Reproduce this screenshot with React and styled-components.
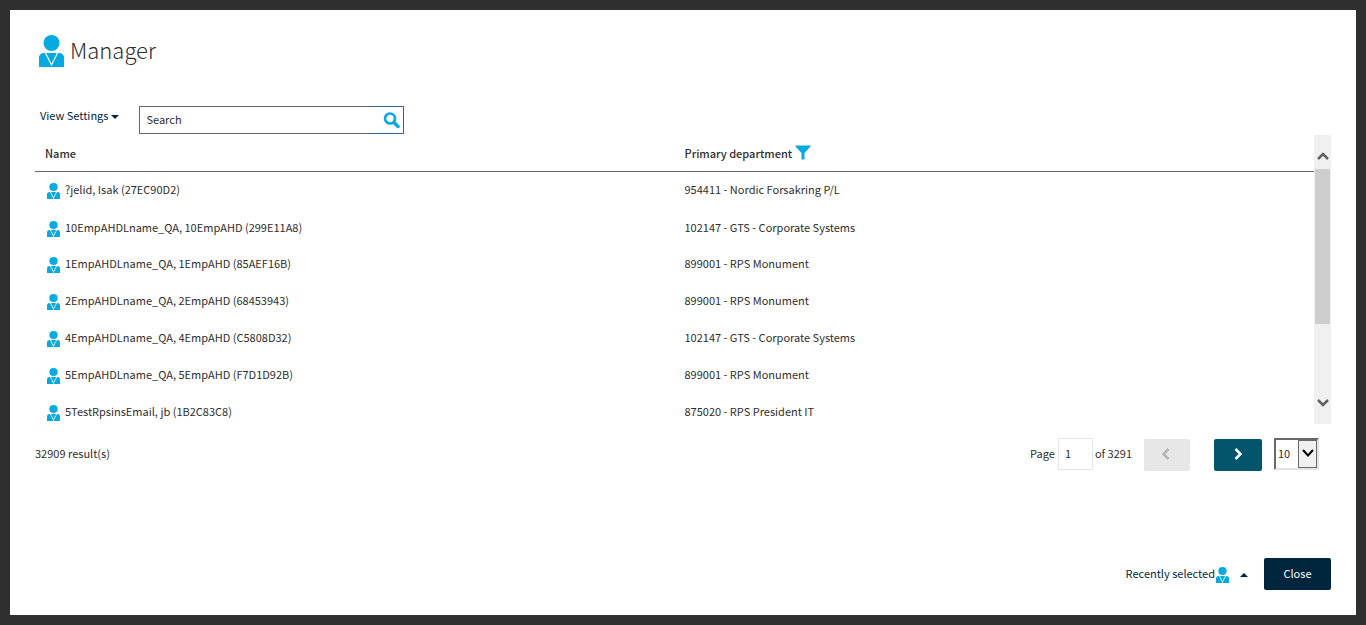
import React from 'react';
import styled, { createGlobalStyle } from 'styled-components';

const GlobalStyle = createGlobalStyle`
  *, *::before, *::after { box-sizing: border-box; }
  body {
    margin: 0;
    background: #2f2f2f;
    color: #2e2e2e;
    font-family: "Noto Sans CJK SC", "Noto Sans", sans-serif;
    font-size: 11px;
    line-height: 16px;
  }
  button, input, select { font: inherit; color: inherit; }
`;

const Page = styled.div`
  display: flex;
  min-height: 100vh;
  padding: 10px;
`;

const Dialog = styled.main`
  display: flex;
  flex: 1;
  flex-direction: column;
  min-width: 0;
  padding: 25px;
  background: #fff;
`;

const Header = styled.header`
  display: flex;
  align-items: flex-start;
  gap: 6px;
  height: 32px;
  padding-left: 4px;
`;

const Title = styled.h1`
  margin: 0;
  font-size: 22px;
  font-weight: 300;
  line-height: 28px;
`;

const PersonSvg = styled.svg`
  display: block;
  flex: none;
  width: ${(p) => (p.$large ? 25 : 13)}px;
  height: ${(p) => (p.$large ? 32 : 16)}px;
`;

const Toolbar = styled.div`
  display: flex;
  align-items: flex-start;
  gap: 20px;
  margin-top: 39px;
  padding-left: 5px;
`;

const TextButton = styled.button`
  display: flex;
  align-items: center;
  gap: ${(p) => p.$gap}px;
  height: 18px;
  padding: 0;
  border: 0;
  background: none;
  color: #00263e;
  cursor: pointer;
`;

const Caret = styled.span`
  width: 0;
  height: 0;
  margin-top: ${(p) => (p.$up ? 2 : 4)}px;
  border: 4px solid transparent;
  border-width: ${(p) => (p.$up ? '0 4px 4px' : '4px 4px 0')};
  border-color: ${(p) => (p.$up ? 'transparent transparent #00263e' : '#00263e transparent transparent')};
`;

const SearchBox = styled.form`
  display: flex;
  width: 265px;
  height: 28px;
`;

const SearchInput = styled.input`
  flex: 1;
  min-width: 0;
  padding: 0 6px 2px;
  border: 1px solid #666;
  border-right: 0;
  border-radius: 0;
  outline: 0;
  background: #fff;
  &::placeholder { color: #2e2e2e; opacity: 1; }
`;

const SearchButton = styled.button`
  display: flex;
  align-items: center;
  justify-content: flex-end;
  width: 32px;
  padding: 0 3px 0 0;
  border: 1px solid #33638a;
  border-left: 0;
  background: #fff;
  cursor: pointer;
`;

const ListArea = styled.section`
  display: flex;
  height: 289px;
  margin-top: 1px;
  overflow: hidden;
`;

const Table = styled.table`
  flex: 1;
  width: 100%;
  height: 296px;
  border-collapse: collapse;
  table-layout: fixed;
`;

const HeadCell = styled.th`
  height: 36px;
  padding: 0 10px;
  border-bottom: 1px solid #666;
  font-weight: 500;
  text-align: left;
`;

const HeadContent = styled.div`
  display: flex;
  align-items: center;
  gap: 3px;
`;

const Cell = styled.td`
  padding: 0 10px 2px;
`;

const PersonName = styled.div`
  display: flex;
  align-items: flex-start;
  gap: 5px;
  height: 16px;
  padding-left: 2px;

  ${PersonSvg} { margin-top: 2px; }
`;

const FilterButton = styled.button`
  display: flex;
  padding: 0;
  border: 0;
  background: none;
  cursor: pointer;
`;

const ScrollTrack = styled.div`
  display: flex;
  flex: none;
  flex-direction: column;
  align-items: center;
  width: 17px;
  padding: 16px 0 17px;
  background: #f0f0f0;
`;

const ScrollThumb = styled.div`
  width: 15px;
  height: 155px;
  margin-top: 9px;
  margin-bottom: auto;
  background: #cdcdcd;
`;

const ResultBar = styled.div`
  display: flex;
  align-items: center;
  justify-content: space-between;
  height: 32px;
  margin-top: 14px;
  padding-right: 12px;
`;

const BarText = styled.span`
  padding-bottom: 2px;
`;

const Pager = styled.nav`
  display: flex;
  align-items: center;
`;

const PageLabel = styled.label`
  display: flex;
  align-items: center;
  gap: 3px;
  margin-right: 2px;
`;

const PageInput = styled.input`
  width: 35px;
  height: 32px;
  padding: 0 6px 2px;
  border: 1px solid #e6e6e6;
  outline: 0;
`;

const StepButton = styled.button`
  display: flex;
  align-items: center;
  justify-content: center;
  width: ${(p) => (p.disabled ? 46 : 48)}px;
  height: 32px;
  margin-top: 2px;
  margin-left: ${(p) => (p.disabled ? 12 : 24)}px;
  padding: 0 0 2px;
  border: 0;
  border-radius: 2px;
  background: ${(p) => (p.disabled ? '#e7e7e7' : '#03556b')};
  color: ${(p) => (p.disabled ? '#b5b5b5' : '#fff')};
`;

const SizePicker = styled.div`
  position: relative;
  margin-left: 12px;
`;

const SizeSelect = styled.select`
  display: block;
  width: 45px;
  height: 32px;
  padding: 0 2px 2px;
  border: 2px solid;
  border-color: #696969 #e3e3e3 #e3e3e3 #696969;
  border-radius: 0;
  outline: 0;
  appearance: none;
  background: #fff;
`;

const SizeArrow = styled.span`
  position: absolute;
  inset: 2px 2px 2px auto;
  display: flex;
  align-items: center;
  justify-content: center;
  width: 19px;
  padding-bottom: 2px;
  border: 1px solid #696969;
  background: #f0f0f0;
  pointer-events: none;
`;

const Footer = styled.footer`
  display: flex;
  align-items: center;
  justify-content: flex-end;
  gap: 16px;
  height: 32px;
  margin-top: auto;
`;

const RecentLabel = styled.span`
  display: flex;
  align-items: flex-start;
  gap: 1px;
  height: 18px;

  ${PersonSvg} { margin-top: 2px; }
`;

const CloseButton = styled.button`
  min-width: 67px;
  height: 32px;
  padding: 0 16px 2px;
  border: 0;
  border-radius: 2px;
  background: #00263e;
  color: #fff;
  cursor: pointer;
`;

function Person({ large }) {
  return (
    <PersonSvg $large={large} viewBox="0 0 25 32" preserveAspectRatio="none" aria-hidden="true">
      <circle cx="12.5" cy="8" r="8" fill="#06a9e0" />
      <path d="M0 32V22.500Q0 19 4 18H21Q25 19 25 22.500V32Z" fill="#06a9e0" />
      <path d="M6.500 18L12.500 30L18.500 18" fill="none" stroke="#fff" strokeWidth={large ? 1.2 : 2} strokeDasharray={large ? undefined : '3 1'} />
    </PersonSvg>
  );
}

function Chevron({ d, width, height, stroke, weight }) {
  return (
    <svg width={width} height={height} viewBox={`0 0 ${width} ${height}`} aria-hidden="true">
      <path d={d} fill="none" stroke={stroke} strokeWidth={weight} />
    </svg>
  );
}

const people = [
  ['?jelid, Isak (27EC90D2)', '954411 - Nordic Forsakring P/L'],
  ['10EmpAHDLname_QA, 10EmpAHD (299E11A8)', '102147 - GTS - Corporate Systems'],
  ['1EmpAHDLname_QA, 1EmpAHD (85AEF16B)', '899001 - RPS Monument'],
  ['2EmpAHDLname_QA, 2EmpAHD (68453943)', '899001 - RPS Monument'],
  ['4EmpAHDLname_QA, 4EmpAHD (C5808D32)', '102147 - GTS - Corporate Systems'],
  ['5EmpAHDLname_QA, 5EmpAHD (F7D1D92B)', '899001 - RPS Monument'],
  ['5TestRpsinsEmail, jb (1B2C83C8)', '875020 - RPS President IT'],
];

export default function App() {
  return (
    <>
      <GlobalStyle />
      <Page>
        <Dialog>
          <Header>
            <Person large />
            <Title>Manager</Title>
          </Header>

          <Toolbar>
            <TextButton type="button" $gap={3}>
              View Settings
              <Caret />
            </TextButton>
            <SearchBox onSubmit={(e) => e.preventDefault()}>
              <SearchInput type="text" placeholder="Search" aria-label="Search" />
              <SearchButton type="submit" aria-label="Run search">
                <svg width="17" height="17" viewBox="0 0 17 17" aria-hidden="true">
                  <circle cx="7" cy="6.500" r="5" fill="none" stroke="#06a9e0" strokeWidth="2.600" />
                  <path d="M11 10.500L15 14.500" stroke="#06a9e0" strokeWidth="3.400" strokeLinecap="round" />
                </svg>
              </SearchButton>
            </SearchBox>
          </Toolbar>

          <ListArea>
            <Table>
              <thead>
                <tr>
                  <HeadCell scope="col">Name</HeadCell>
                  <HeadCell scope="col">
                    <HeadContent>
                      Primary department
                      <FilterButton type="button" aria-label="Filter departments">
                        <svg width="16" height="15" viewBox="0 0 16 15" aria-hidden="true">
                          <path d="M0.500 0.500H15.500V1.500L9.500 8V14.500H6.500V8L0.500 1.500Z" fill="#06a9e0" />
                        </svg>
                      </FilterButton>
                    </HeadContent>
                  </HeadCell>
                </tr>
              </thead>
              <tbody>
                {people.map(([name, department]) => (
                  <tr key={name}>
                    <Cell>
                      <PersonName>
                        <Person />
                        {name}
                      </PersonName>
                    </Cell>
                    <Cell>{department}</Cell>
                  </tr>
                ))}
              </tbody>
            </Table>
            <ScrollTrack aria-hidden="true">
              <Chevron width={12} height={9} d="M1 8L6 3L11 8" stroke="#606060" weight={2.5} />
              <ScrollThumb />
              <Chevron width={12} height={9} d="M1 2L6 7L11 2" stroke="#606060" weight={2.5} />
            </ScrollTrack>
          </ListArea>

          <ResultBar>
            <BarText>32909 result(s)</BarText>
            <Pager aria-label="Pages">
              <PageLabel>
                <BarText>Page</BarText>
                <PageInput type="text" defaultValue="1" />
              </PageLabel>
              <BarText>of 3291</BarText>
              <StepButton type="button" disabled aria-label="Previous page">
                <Chevron width={10} height={12} d="M6.500 1L1.500 6L6.500 11" stroke="currentColor" weight={2.5} />
              </StepButton>
              <StepButton type="button" aria-label="Next page">
                <Chevron width={10} height={12} d="M2.500 1L7.500 6L2.500 11" stroke="currentColor" weight={2.5} />
              </StepButton>
              <SizePicker>
                <SizeSelect aria-label="Rows per page" defaultValue="10">
                  <option>10</option>
                  <option>25</option>
                  <option>50</option>
                </SizeSelect>
                <SizeArrow>
                  <Chevron width={12} height={9} d="M1 1L6 6.500L11 1" stroke="#000" weight={2} />
                </SizeArrow>
              </SizePicker>
            </Pager>
          </ResultBar>

          <Footer>
            <TextButton type="button" $gap={11}>
              <RecentLabel>
                Recently selected
                <Person />
              </RecentLabel>
              <Caret $up />
            </TextButton>
            <CloseButton type="button">Close</CloseButton>
          </Footer>
        </Dialog>
      </Page>
    </>
  );
}
